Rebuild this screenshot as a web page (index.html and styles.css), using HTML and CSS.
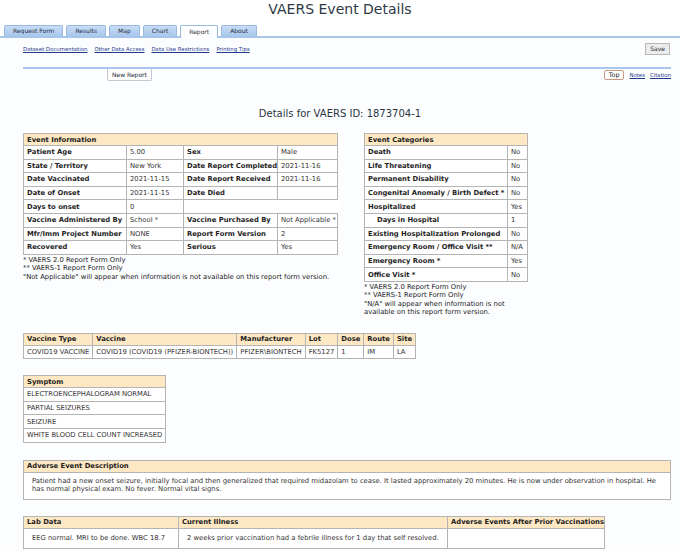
FILE: index.html
```html
<!DOCTYPE html>
<html>
<head>
<meta charset="utf-8">
<title>VAERS Event Details</title>
<link rel="stylesheet" href="styles.css">
</head>
<body>
<h1 class="title">VAERS Event Details</h1>
<div class="tabs">
  <span class="tab">Request Form</span>
  <span class="tab">Results</span>
  <span class="tab">Map</span>
  <span class="tab">Chart</span>
  <span class="tab active">Report</span>
  <span class="tab">About</span>
</div>
<div class="panel">
  <div class="toolbar">
    <div class="links">
      <a href="#">Dataset Documentation</a>
      <a href="#">Other Data Access</a>
      <a href="#">Data Use Restrictions</a>
      <a href="#">Printing Tips</a>
    </div>
    <span class="save">Save</span>
  </div>
  <div class="subbar">
    <span class="newreport">New Report</span>
    <div class="subright">
      <span class="topbtn">Top</span>
      <a href="#">Notes</a>
      <a href="#">Citation</a>
    </div>
  </div>

  <h2 class="heading">Details for VAERS ID: 1873704-1</h2>

  <div class="content">
    <div class="pair">
      <div class="block">
        <table class="grid info">
          <colgroup><col class="c1"><col class="c2"><col class="c3"><col class="c4"></colgroup>
          <tr><th colspan="4">Event Information</th></tr>
          <tr><td class="lbl">Patient Age</td><td>5.00</td><td class="lbl">Sex</td><td>Male</td></tr>
          <tr><td class="lbl">State / Territory</td><td>New York</td><td class="lbl">Date Report Completed</td><td>2021-11-16</td></tr>
          <tr><td class="lbl">Date Vaccinated</td><td>2021-11-15</td><td class="lbl">Date Report Received</td><td>2021-11-16</td></tr>
          <tr><td class="lbl">Date of Onset</td><td>2021-11-15</td><td class="lbl">Date Died</td><td></td></tr>
          <tr><td class="lbl">Days to onset</td><td>0</td><td colspan="2" class="blank"></td></tr>
          <tr><td class="lbl">Vaccine Administered By</td><td>School *</td><td class="lbl">Vaccine Purchased By</td><td>Not Applicable *</td></tr>
          <tr><td class="lbl">Mfr/Imm Project Number</td><td>NONE</td><td class="lbl">Report Form Version</td><td>2</td></tr>
          <tr><td class="lbl">Recovered</td><td>Yes</td><td class="lbl">Serious</td><td>Yes</td></tr>
        </table>
        <p class="note">* VAERS 2.0 Report Form Only<br>** VAERS-1 Report Form Only<br>"Not Applicable" will appear when information is not available on this report form version.</p>
      </div>
      <div class="block cats">
        <table class="grid catt">
          <colgroup><col class="k1"><col class="k2"></colgroup>
          <tr><th colspan="2">Event Categories</th></tr>
          <tr><td class="lbl">Death</td><td>No</td></tr>
          <tr><td class="lbl">Life Threatening</td><td>No</td></tr>
          <tr><td class="lbl">Permanent Disability</td><td>No</td></tr>
          <tr><td class="lbl">Congenital Anomaly / Birth Defect *</td><td>No</td></tr>
          <tr><td class="lbl">Hospitalized</td><td>Yes</td></tr>
          <tr><td class="lbl indent">Days in Hospital</td><td>1</td></tr>
          <tr><td class="lbl">Existing Hospitalization Prolonged</td><td>No</td></tr>
          <tr><td class="lbl">Emergency Room / Office Visit **</td><td>N/A</td></tr>
          <tr><td class="lbl">Emergency Room *</td><td>Yes</td></tr>
          <tr><td class="lbl">Office Visit *</td><td>No</td></tr>
        </table>
        <p class="note">* VAERS 2.0 Report Form Only<br>** VAERS-1 Report Form Only<br>"N/A" will appear when information is not available on this report form version.</p>
      </div>
    </div>

    <table class="grid vax">
      <tr><th>Vaccine Type</th><th>Vaccine</th><th>Manufacturer</th><th>Lot</th><th>Dose</th><th>Route</th><th>Site</th></tr>
      <tr><td>COVID19 VACCINE</td><td>COVID19 (COVID19 (PFIZER-BIONTECH))</td><td>PFIZER\BIONTECH</td><td>FK5127</td><td>1</td><td>IM</td><td>LA</td></tr>
    </table>

    <table class="grid symptoms">
      <tr><th>Symptom</th></tr>
      <tr><td>ELECTROENCEPHALOGRAM NORMAL</td></tr>
      <tr><td>PARTIAL SEIZURES</td></tr>
      <tr><td>SEIZURE</td></tr>
      <tr><td>WHITE BLOOD CELL COUNT INCREASED</td></tr>
    </table>

    <table class="grid desc">
      <tr><th>Adverse Event Description</th></tr>
      <tr><td class="text">Patient had a new onset seizure, initially focal and then generalized that required midazolam to cease. It lasted approximately 20 minutes. He is now under observation in hospital. He has normal physical exam. No fever. Normal vital signs.</td></tr>
    </table>

    <table class="grid lab">
      <colgroup><col class="l1"><col class="l2"><col class="l3"></colgroup>
      <tr><th>Lab Data</th><th>Current Illness</th><th>Adverse Events After Prior Vaccinations</th></tr>
      <tr><td class="text one">EEG normal. MRI to be done. WBC 18.7</td><td class="text one">2 weeks prior vaccination had a febrile illness for 1 day that self resolved.</td><td></td></tr>
    </table>
  </div>
</div>
</body>
</html>
```

FILE: styles.css
```css
html, body {
  margin: 0;
  padding: 0;
}
body {
  background: #fcfdff;
  font-family: "DejaVu Sans", Verdana, sans-serif;
  color: #333;
  width: 680px;
  overflow: hidden;
}
.title {
  margin: 0;
  height: 26px;
  line-height: 18px;
  font-size: 14px;
  font-weight: normal;
  text-align: center;
  color: #2e3a46;
  background: #fff;
}
.tabs {
  display: flex;
  align-items: flex-end;
  gap: 3px;
  padding-left: 4px;
  height: 10px;
  background: #fff;
}
.tab {
  height: 10px;
  line-height: 10px;
  padding: 0 8px;
  font-size: 6px;
  color: #1c2a44;
  background: linear-gradient(#c9ddf5, #a9c7ec);
  border: 1px solid #9ab9e0;
  border-bottom: none;
  border-radius: 2px 2px 0 0;
}
.tab.active {
  height: 12px;
  line-height: 12px;
  background: #fdfeff;
  margin-bottom: -2px;
  position: relative;
  color: #333;
}
.panel {
  border-top: 2px solid #a6c4ec;
}
.toolbar {
  display: flex;
  justify-content: space-between;
  padding: 5px 10px 0 23px;
  height: 24px;
  align-items: flex-start;
}
.links {
  display: flex;
  gap: 7px;
  padding-top: 3px;
}
.links a, .subright a {
  font-size: 5.4px;
  color: #1f3a8a;
  text-decoration: underline;
}
.save {
  font-size: 6px;
  line-height: 8px;
  padding: 1px 4px;
  background: #ececec;
  border: 1px solid #b8b8b8;
  color: #222;
}
.subbar {
  display: flex;
  justify-content: space-between;
  align-items: flex-start;
  margin: 0 9px 0 23px;
  border-top: 2px solid #a9c5eb;
}
.newreport {
  margin-left: 84px;
  font-size: 6px;
  line-height: 9px;
  padding: 1px 4px 1px;
  background: #fff;
  border: 1px solid #c4c8d0;
  border-top: none;
  border-radius: 0 0 2px 2px;
  color: #223;
}
.subright {
  display: flex;
  align-items: center;
  gap: 5px;
  padding-top: 1px;
}
.topbtn {
  font-size: 6.3px;
  line-height: 8px;
  padding: 0 4px;
  border: 1px solid #c99a80;
  border-radius: 2px;
  background: #fff;
  color: #222;
}
.heading {
  margin: 26px 0 0;
  font-size: 10px;
  line-height: 14px;
  font-weight: normal;
  text-align: center;
  color: #2a3542;
}
.content {
  padding: 12px 0 0 23px;
}
.pair {
  display: flex;
  gap: 26px;
  align-items: flex-start;
}
.grid {
  border-collapse: collapse;
  background: #fff;
  font-size: 6.8px;
  border: 1px solid #9a9a9a;
}
.grid th, .grid td {
  border: 1px solid #b4b4b4;
  height: 12.6px;
  padding: 0 3px;
  text-align: left;
  white-space: nowrap;
  color: #333;
}
.grid th {
  background: #fee8c3;
  font-weight: bold;
  color: #222;
  height: 11px;
}
.grid td.lbl {
  font-weight: bold;
  color: #1e1e1e;
}
.grid td.indent {
  padding-left: 12px;
}
.grid td.blank {
  border-right-color: #fff;
}
.info {
  width: 314px;
  table-layout: fixed;
}
.info .c1 { width: 103px; }
.info .c2 { width: 57px; }
.info .c3 { width: 94px; }
.info .c4 { width: 60px; }
.catt {
  width: 163px;
  table-layout: fixed;
}
.catt .k1 { width: 143px; }
.catt .k2 { width: 20px; }
.note {
  margin: 1px 0 0;
  font-size: 6.8px;
  line-height: 8.4px;
  color: #222;
}
.cats .note {
  width: 163px;
}
.vax {
  margin-top: 16px;
}
.symptoms {
  margin-top: 16px;
  width: 143px;
}
.desc {
  margin-top: 17px;
  width: 648px;
}
.grid td.text {
  white-space: normal;
  padding: 4px 6px 5px 8px;
  line-height: 8.6px;
}
.grid td.text.one {
  white-space: nowrap;
  overflow: hidden;
  padding: 0 8px;
  height: 19px;
}
.lab {
  margin-top: 16px;
  width: 581px;
  table-layout: fixed;
}
.lab .l1 { width: 155px; }
.lab .l2 { width: 269px; }
.lab .l3 { width: 157px; }
```
